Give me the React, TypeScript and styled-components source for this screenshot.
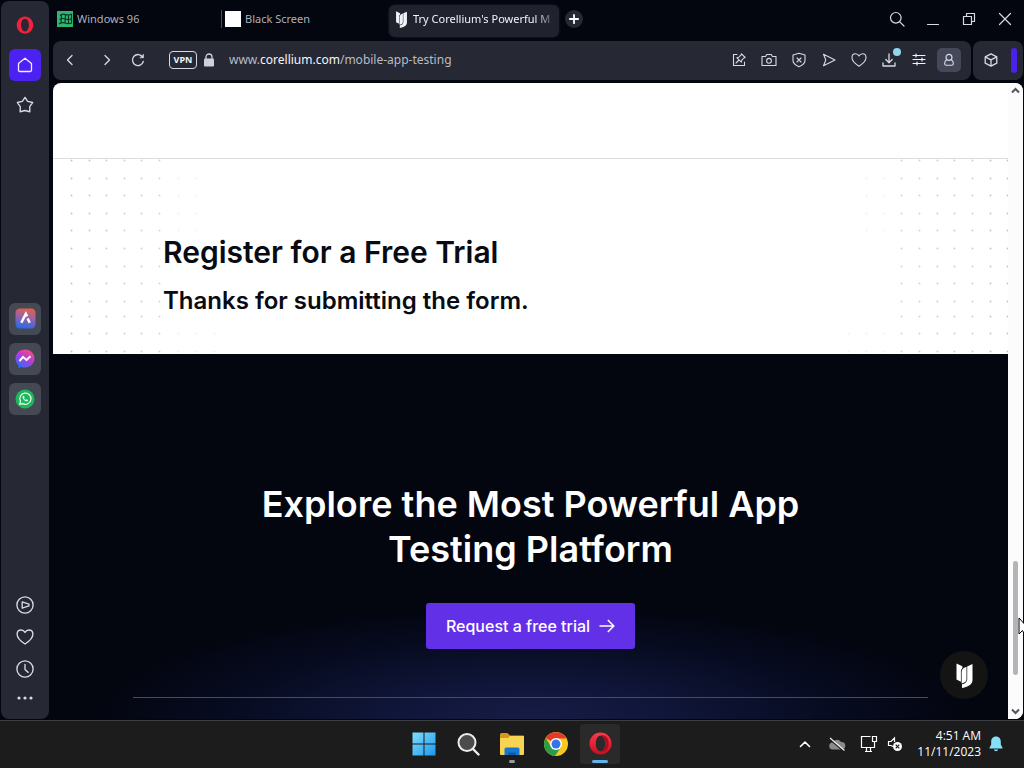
import React from 'react';
import styled, { createGlobalStyle, css } from 'styled-components';

const ui = '"Noto Sans", "Open Sans", sans-serif';

const GlobalStyle = createGlobalStyle`
  * { box-sizing: border-box; }
  html, body { margin: 0; padding: 0; background: #03050f; }
  body { font-family: ${ui}; overflow: hidden; }
  button, input { font: inherit; color: inherit; }
  h1, h2, p { margin: 0; }
`;

const Desktop = styled.div`
  position: relative;
  display: flex;
  flex-direction: column;
  height: 100vh;
  overflow: hidden;
  background: #03050f;
`;

const Browser = styled.div`
  flex: 1;
  min-height: 0;
  display: flex;
  gap: 4px;
  padding: 0 1px 1px;
`;

const Sidebar = styled.nav`
  width: 48px;
  margin: 1px 0 0;
  padding: 8px 0;
  display: flex;
  flex-direction: column;
  justify-content: space-between;
  background: #262934;
  border-radius: 8px;
`;

const SideGroup = styled.div<{ $gap: number; $top?: number }>`
  display: flex;
  flex-direction: column;
  align-items: center;
  gap: ${p => p.$gap}px;
  padding-top: ${p => p.$top ?? 0}px;
`;

const IconButton = styled.button<{ $size?: number; $h?: number; $bg?: string; $radius?: number; $color?: string }>`
  position: relative;
  flex: none;
  display: flex;
  align-items: center;
  justify-content: center;
  width: ${p => p.$size ?? 32}px;
  height: ${p => p.$h ?? p.$size ?? 32}px;
  padding: 0;
  border: 0;
  border-radius: ${p => p.$radius ?? 6}px;
  background: ${p => p.$bg ?? 'transparent'};
  color: ${p => p.$color ?? '#d7d9e4'};
  svg { display: block; }
`;

const Main = styled.div`
  flex: 1;
  min-width: 0;
  display: flex;
  flex-direction: column;
`;

const TabBar = styled.div`
  height: 41px;
  display: flex;
  align-items: center;
  padding: 0 2px 3px 0;
`;

const TabList = styled.div`
  display: flex;
  align-items: center;
  height: 38px;
  margin-right: 6px;
`;

const Tab = styled.button<{ $active?: boolean; $divider?: boolean }>`
  display: flex;
  align-items: center;
  gap: 4px;
  width: 168px;
  height: 32px;
  padding: 0 4px;
  border: 0;
  background: transparent;
  color: #aeb0ba;
  font-size: 11px;
  line-height: 16px;
  white-space: nowrap;
  overflow: hidden;
  svg { flex: none; }
  ${p => p.$divider && css`
    background: linear-gradient(#4b4d57, #4b4d57) 0 50% / 1px 18px no-repeat;
  `}
  ${p => p.$active && css`
    margin-top: 4px;
    width: 170px;
    padding: 0 5px 4px;
    background: #20232e;
    color: #f2f3f8;
    border-radius: 6px;
    box-shadow: 0 0 3px #20232e;
  `}
`;

const TabTitle = styled.span<{ $fade?: boolean }>`
  overflow: hidden;
  ${p => p.$fade && css`
    mask-image: linear-gradient(90deg, #000 122px, transparent 144px);
  `}
`;

const Spacer = styled.div`
  flex: 1;
`;

const WindowButtons = styled.div`
  display: flex;
  align-items: center;
  gap: 4px;
  height: 38px;
`;

const Bars = styled.div`
  display: flex;
  gap: 2px;
  height: 39px;
  margin-bottom: 3px;
`;

const AddressBar = styled.div`
  flex: 1;
  min-width: 0;
  display: flex;
  align-items: center;
  padding: 0 10px 1px 0;
  border-radius: 8px;
  background: #262934;
`;

const NavButtons = styled.div`
  display: flex;
  align-items: center;
  margin-right: 20px;
`;

const VpnButton = styled.button`
  width: 28px;
  height: 18px;
  padding: 0;
  border: 1px solid #d7d9e4;
  border-radius: 4px;
  background: transparent;
  color: #f2f3f8;
  font-size: 9px;
  font-weight: 700;
  line-height: 16px;
`;

const Address = styled.a`
  flex: 1;
  min-width: 0;
  margin-left: 8px;
  color: #b9bbc6;
  font-size: 12px;
  line-height: 18px;
  text-decoration: none;
  white-space: nowrap;
  overflow: hidden;
  b { font-weight: 400; color: #f5f6fa; }
`;

const Tools = styled.div`
  display: flex;
  align-items: center;
  gap: 6px;
`;

const Dot = styled.span`
  position: absolute;
  top: 0;
  right: 0;
  width: 8px;
  height: 8px;
  border-radius: 50%;
  background: #8fd6ea;
`;

const SideBar = styled.div`
  width: 50px;
  display: flex;
  align-items: center;
  justify-content: space-between;
  padding: 0 6px 1px;
  border-radius: 8px;
  background: #262934;
`;

const Accent = styled.span`
  width: 6px;
  height: 25px;
  border-radius: 3px;
  background: #4a22ea;
`;

const Viewport = styled.div`
  flex: 1;
  min-height: 0;
  display: flex;
  overflow: hidden;
  border-radius: 8px 8px 8px 0;
  background: #fff;
`;

const Page = styled.main`
  position: relative;
  flex: 1;
  min-width: 0;
  display: flex;
  flex-direction: column;
  font-family: Inter, sans-serif;
`;

const Blank = styled.div`
  flex: none;
  height: 75px;
`;

const FormSection = styled.section`
  position: relative;
  flex: none;
  height: 196px;
  padding: 73px 110px 0;
  border-top: 1px solid #dcdde0;
  background: #fff;
  color: #080b12;
`;

const Dots = styled.svg<{ $right?: boolean }>`
  position: absolute;
  top: 0;
  ${p => (p.$right ? 'right: 0;' : 'left: 0;')}
`;

const FormTitle = styled.h1`
  position: relative;
  font-size: 30px;
  font-weight: 600;
  line-height: 40px;
`;

const FormNote = styled.p`
  position: relative;
  margin-top: 13px;
  font-size: 24px;
  font-weight: 600;
  line-height: 32px;
`;

const Promo = styled.section`
  flex: 1;
  display: flex;
  flex-direction: column;
  align-items: center;
  padding: 128px 80px 0;
  background: radial-gradient(ellipse 440px 115px at 50% 100%, #171c45 0%, #10163a 30%, #070b20 70%, #03050f 100%) #03050f;
`;

const PromoTitle = styled.h2`
  max-width: 600px;
  color: #fff;
  text-align: center;
  font-size: 36px;
  font-weight: 600;
  line-height: 45px;
`;

const TrialLink = styled.a`
  display: flex;
  align-items: center;
  gap: 9px;
  height: 46px;
  margin-top: 31px;
  padding: 0 20px;
  border-radius: 3px;
  background: #6230e6;
  color: #fff;
  font-size: 16px;
  font-weight: 500;
  line-height: 24px;
  text-decoration: none;
`;

const Rule = styled.hr`
  width: 100%;
  margin: 48px 0 0;
  border: 0;
  border-top: 1px solid #444b66;
`;

const ChatButton = styled.button`
  position: absolute;
  right: 20px;
  bottom: 20px;
  display: flex;
  align-items: center;
  justify-content: center;
  width: 48px;
  height: 48px;
  padding: 0;
  border: 0;
  border-radius: 50%;
  background: #141414;
  color: #fff;
`;

const Scrollbar = styled.div`
  width: 15px;
  display: flex;
  flex-direction: column;
  align-items: center;
  padding: 4px 0;
  background: #fcfcfd;
`;

const Thumb = styled.div`
  width: 5px;
  height: 114px;
  margin-bottom: 33px;
  border-radius: 3px;
  background: #b4b5b8;
`;

const Pointer = styled.svg`
  position: absolute;
  right: -6px;
  top: 617px;
`;

const Taskbar = styled.footer`
  flex: none;
  height: 48px;
  display: grid;
  grid-template-columns: 1fr auto 1fr;
  align-items: center;
  padding-bottom: 2px;
  border-top: 1px solid #3c3e44;
  background: #1c1c1c;
  color: #fff;
`;

const Apps = styled.div`
  grid-column: 2;
  display: flex;
  gap: 4px;
`;

const AppButton = styled.button<{ $active?: boolean }>`
  position: relative;
  display: flex;
  align-items: center;
  justify-content: center;
  width: 40px;
  height: 40px;
  padding: 0;
  border: 0;
  border-radius: 4px;
  background: ${p => (p.$active ? '#2a2a2a' : 'transparent')};
`;

const Indicator = styled.span<{ $active?: boolean }>`
  position: absolute;
  bottom: 1px;
  width: ${p => (p.$active ? 16 : 6)}px;
  height: 3px;
  border-radius: 2px;
  background: ${p => (p.$active ? '#5fb4ea' : '#9c9c9c')};
`;

const Tray = styled.div`
  display: flex;
  align-items: center;
  justify-content: flex-end;
  padding-right: 21px;
`;

const Clock = styled.time`
  margin: 0 8px 0 12px;
  text-align: right;
  font-family: "Open Sans", "Noto Sans", sans-serif;
  font-size: 12px;
  line-height: 16px;
`;

type LineProps = { size?: number; w?: number; children: React.ReactNode };
const Line = ({ size = 16, w = 1.2, children }: LineProps) => (
  <svg width={size} height={size} viewBox="0 0 16 16" fill="none" stroke="currentColor" strokeWidth={w} strokeLinecap="round" strokeLinejoin="round">
    {children}
  </svg>
);

const heart = 'M8 14.2C5.5 12.6 1 9.400 1 5.500C1 3.200 2.600 1.800 4.500 1.800C6 1.800 7.300 2.600 8 4C8.700 2.600 10 1.800 11.500 1.800C13.400 1.800 15 3.200 15 5.500C15 9.400 10.500 12.600 8 14.200Z';

const OperaMark = ({ size, task }: { size: number; task?: boolean }) => (
  <svg width={size} height={size} viewBox="0 0 24 24">
    <defs>
      <linearGradient id="operaRed" x1="0" y1="0" x2="0" y2="1">
        <stop offset="0" stopColor="#ff3a4b" />
        <stop offset="1" stopColor="#c80d22" />
      </linearGradient>
    </defs>
    <path
      fillRule="evenodd"
      fill={task ? 'url(#operaRed)' : '#f2213c'}
      d={task
        ? 'M12 0.500a11.500 11.500 0 1 0 0 23a11.500 11.500 0 1 0 0-23ZM12 3.800c2.900 0 4.900 3.500 4.900 8.200s-2 8.200-4.900 8.200s-4.900-3.500-4.900-8.200s2-8.200 4.900-8.200Z'
        : 'M12 0.500c-6 0-11 5-11 11.500S6 23.500 12 23.500S23 18.500 23 12S18 0.500 12 0.500ZM12 3.500c3.200 0 5.200 3.700 5.200 8.500s-2 8.500-5.200 8.500s-5.200-3.700-5.200-8.500s2-8.500 5.200-8.500Z'}
    />
    {task && <path fill="#a81020" d="M12 3.800c2.900 0 4.900 3.500 4.900 8.200s-2 8.200-4.900 8.200c5.500 1.500 8.500-3 8.500-8.200s-3-9.700-8.500-8.200Z" />}
  </svg>
);

const CorelliumMark = ({ w, h }: { w: number; h: number }) => (
  <svg width={w} height={h} viewBox="0 0 17 25" fill="currentColor">
    <path d="M0.500 0.500L6.400 3.200V5C5.200 6 4.900 7.800 4.900 9.500V18.800L0.500 16.500Z" />
    <path d="M5.600 9.500C5.600 6.500 7.200 4.800 10.500 3.800V16C10.500 18.500 8.800 19.800 5.600 20.400Z" />
    <path d="M11.200 3.400L16.500 1V17C16.500 21 13 23.800 6 25V21.200C9.800 20.500 11.200 18.500 11.200 16Z" />
  </svg>
);

const rowsY = [1, 19, 36, 54, 71, 89, 107, 124, 142, 157, 174, 192];
const leftX = [18, 36, 53, 71, 88, 106, 125, 143, 161];
const rightX = [180, 163, 145, 127, 110, 92, 74, 57, 39, 21, 4];

const dotAlpha = (col: number, row: number, solid: number) => {
  if (col < solid) return 0.24 - (col / solid) * 0.07;
  const reach = row > 9 ? 3 : row > 0 && row < 5 ? 2 : 0;
  return col < solid + reach ? 0.06 : 0;
};

const DotField = ({ xs, solid, right }: { xs: number[]; solid: number; right?: boolean }) => (
  <Dots $right={right} width="181" height="195" aria-hidden="true">
    {rowsY.flatMap((y, r) =>
      xs.map((x, c) => <circle key={`${x}-${y}`} cx={x + 0.5} cy={y + 0.5} r="1" fill="#10131c" opacity={dotAlpha(c, r, solid)} />)
    )}
  </Dots>
);

const Chevron = ({ up }: { up?: boolean }) => (
  <svg width="9" height="7" viewBox="0 0 9 7" fill="none" stroke="#55565a" strokeWidth="2">
    <path d={up ? 'M1 5.500L4.500 2L8 5.500' : 'M1 1.500L4.500 5L8 1.500'} />
  </svg>
);

export default function App() {
  return (
    <Desktop>
      <GlobalStyle />
      <Browser>
        <Sidebar aria-label="Browser sidebar">
          <SideGroup $gap={8}>
            <IconButton aria-label="Opera menu"><OperaMark size={18} /></IconButton>
            <IconButton $bg="#4b22f2" aria-label="Home" $color="#f1edff">
              <Line w={1.3}><path d="M1.500 6.500L8 1.200L14.500 6.500V13.200a1.300 1.300 0 0 1-1.300 1.300H2.800a1.300 1.300 0 0 1-1.300-1.300Z" /></Line>
            </IconButton>
            <IconButton aria-label="Bookmarks">
              <Line size={18} w={1.2}><path d="M8 1.200L10.400 4.700L14.800 5.800L12.200 9.500L12.300 14L8 12.900L3.700 14L3.800 9.500L1.200 5.800L5.600 4.700Z" /></Line>
            </IconButton>
          </SideGroup>
          <SideGroup $gap={8} $top={7}>
            <IconButton $bg="#454954" aria-label="Aria">
              <svg width="21" height="21" viewBox="0 0 20 20">
                <defs>
                  <linearGradient id="aria" x1="0.600" y1="0" x2="0.400" y2="1">
                    <stop offset="0" stopColor="#e2604c" />
                    <stop offset="0.450" stopColor="#9a62a8" />
                    <stop offset="1" stopColor="#2769e8" />
                  </linearGradient>
                </defs>
                <rect x="0.500" y="0.500" width="19" height="19" rx="4" fill="url(#aria)" />
                <path d="M6 14L10.300 5.500L11.500 8" fill="none" stroke="#fff" strokeWidth="2.400" />
                <path d="M12 10L14 14" stroke="#fff" strokeWidth="2.400" />
              </svg>
            </IconButton>
            <IconButton $bg="#454954" aria-label="Messenger">
              <svg width="20" height="20" viewBox="0 0 20 20">
                <defs>
                  <linearGradient id="msgr" x1="0.800" y1="0" x2="0.200" y2="1">
                    <stop offset="0" stopColor="#ff4f72" />
                    <stop offset="0.450" stopColor="#b63cd8" />
                    <stop offset="1" stopColor="#1f6fff" />
                  </linearGradient>
                </defs>
                <path d="M10 0.500C4.500 0.500 0.500 4.500 0.500 9.600C0.500 12.400 1.600 14.700 3.500 16.300V19.300L6.300 18C7.500 18.400 8.700 18.600 10 18.600C15.500 18.600 19.500 14.700 19.500 9.600C19.500 4.500 15.500 0.500 10 0.500Z" fill="url(#msgr)" />
                <path d="M4.500 12L8 8L11.500 11L15.500 7.300" fill="none" stroke="#fff" strokeWidth="2" />
              </svg>
            </IconButton>
            <IconButton $bg="#454954" aria-label="WhatsApp">
              <svg width="20" height="20" viewBox="0 0 20 20">
                <circle cx="10" cy="10" r="9.500" fill="#1fb65c" />
                <path d="M4.700 15.300L5.500 12.400A5.600 5.600 0 1 1 7.700 14.600Z" fill="none" stroke="#e8fff0" strokeWidth="1.200" />
                <path d="M7.600 7.200C7.300 9.800 10 12.700 12.600 12.300L13 11L11.500 10.300L10.800 11C9.900 10.600 9.300 10 9 9.100L9.600 8.500L9 7Z" fill="#e8fff0" />
              </svg>
            </IconButton>
          </SideGroup>
          <SideGroup $gap={0}>
            <IconButton aria-label="Player">
              <Line size={18} w={1.2}><circle cx="8" cy="8" r="7.200" /><path d="M5.500 5.200V10.800L11.500 8.800V7.200Z" /></Line>
            </IconButton>
            <IconButton aria-label="Pinboards"><Line size={18} w={1.2}><path d={heart} /></Line></IconButton>
            <IconButton aria-label="History">
              <Line size={18} w={1.2}><circle cx="8" cy="8" r="7.200" /><path d="M8 4V8.500L10.800 11" /></Line>
            </IconButton>
            <IconButton $h={26} aria-label="More">
              <svg width="18" height="4" fill="currentColor"><circle cx="3" cy="2" r="1.600" /><circle cx="9" cy="2" r="1.600" /><circle cx="15" cy="2" r="1.600" /></svg>
            </IconButton>
          </SideGroup>
        </Sidebar>

        <Main>
          <TabBar>
            <TabList role="tablist">
              <Tab role="tab">
                <svg width="16" height="16" viewBox="0 0 16 16">
                  <rect width="16" height="16" fill="#2fb571" />
                  <path d="M3 4.500C5 2.500 7 3 8.500 3.500S12 4.500 14.500 3.300V12C12 13.400 9.500 12.500 8 12S4 11.500 2 13M2.500 8.500C5 7 7 7.500 8.500 8S12 9 14.500 7.800M8.500 3.500L8 12M4.500 4L4 12M11.500 4.500V13" fill="none" stroke="#07351f" strokeWidth="1.100" />
                </svg>
                <TabTitle>Windows 96</TabTitle>
              </Tab>
              <Tab role="tab" $divider>
                <svg width="16" height="16"><rect width="16" height="16" fill="#fff" /></svg>
                <TabTitle>Black Screen</TabTitle>
              </Tab>
              <Tab role="tab" $active aria-selected="true">
                <CorelliumMark w={15} h={17} />
                <TabTitle $fade>Try Corellium's Powerful M</TabTitle>
              </Tab>
            </TabList>
            <IconButton $size={18} $bg="#262934" $radius={9} $color="#fff" aria-label="New tab">
              <Line size={12} w={2.4}><path d="M8 2.500V13.500M2.500 8H13.500" /></Line>
            </IconButton>
            <Spacer />
            <WindowButtons>
              <IconButton aria-label="Search tabs"><Line w={1.2}><circle cx="6.800" cy="6.800" r="5.300" /><path d="M10.800 10.800L15 15" /></Line></IconButton>
              <IconButton aria-label="Minimize"><Line w={1.2}><path d="M2.500 13.500H13.500" /></Line></IconButton>
              <IconButton aria-label="Restore"><Line w={1.2}><path d="M2.500 5.500H10.500V13.500H2.500ZM5.500 5.500V2.500H13.500V10.500H10.500" /></Line></IconButton>
              <IconButton aria-label="Close"><Line w={1.2}><path d="M2.500 2.500L13.500 13.500M13.500 2.500L2.500 13.500" /></Line></IconButton>
            </WindowButtons>
          </TabBar>

          <Bars>
            <AddressBar>
              <NavButtons>
                <IconButton $size={34} aria-label="Back"><Line w={1.3}><path d="M10 3.500L5.500 8L10 12.500" /></Line></IconButton>
                <IconButton $size={40} $h={34} aria-label="Forward"><Line w={1.3}><path d="M6 3.500L10.500 8L6 12.500" /></Line></IconButton>
                <IconButton $size={22} aria-label="Reload"><Line w={1.3}><path d="M13.300 9.500A5.500 5.500 0 1 1 12.600 5" /><path d="M13.500 2.500V5.800H10.200Z" fill="currentColor" strokeWidth="0.600" /></Line></IconButton>
              </NavButtons>
              <VpnButton>VPN</VpnButton>
              <IconButton $size={24} $color="#cfd1da" aria-label="Site information">
                <svg width="12" height="14" viewBox="0 0 12 14"><rect x="1" y="5.500" width="10" height="8" rx="1" fill="currentColor" /><path d="M3 6V4a3 3 0 0 1 6 0V6" fill="none" stroke="currentColor" strokeWidth="1.300" /></svg>
              </IconButton>
              <Address href="#">www.<b>corellium.com</b>/mobile-app-testing</Address>
              <Tools>
                <IconButton $size={24} aria-label="Edit page"><Line w={1.1}><path d="M6 2.500H2.500V13.500H13.500V10M10.500 1.800L14.200 5.500L12.800 6L10.800 8.200L10.300 10.200L5.800 5.700L7.800 5.200L10 3.200ZM8 8L5 11" /></Line></IconButton>
                <IconButton $size={24} aria-label="Snapshot"><Line w={1.1}><path d="M1 4.500H4.500L5.800 2.500H10.200L11.500 4.500H15V13.500H1Z" /><circle cx="8" cy="8.800" r="2.400" /></Line></IconButton>
                <IconButton $size={24} aria-label="Ad blocker"><Line w={1.1}><path d="M8 1.200L14 3V8.500C14 11.500 11 13.500 8 14.800C5 13.500 2 11.500 2 8.500V3ZM6 6L10 10M10 6L6 10" /></Line></IconButton>
                <IconButton $size={24} aria-label="My Flow"><Line w={1.1}><path d="M2.500 2.200L14 8L2.500 13.800L4.800 8Z" /></Line></IconButton>
                <IconButton $size={24} aria-label="Add to bookmarks"><Line w={1.1}><path d={heart} /></Line></IconButton>
                <IconButton $size={24} aria-label="Downloads"><Line w={1.3}><path d="M8 2V10.500M4.800 7.500L8 10.700L11.200 7.500M2 11V14H14V11" /></Line><Dot /></IconButton>
                <IconButton $size={24} $color="#f2f3f8" aria-label="Easy setup"><Line w={1.2}><path d="M2 3.500H14M2 7.500H14M2 11.500H14M5 2V5M11 6V9M6 10V13" /></Line></IconButton>
                <IconButton $size={24} $bg="#454859" $radius={5} aria-label="Profile"><Line size={14} w={1.3}><circle cx="8" cy="5" r="3.400" /><path d="M5.500 7.300C3.500 8.500 3 10.500 3 12.200C3 13.500 4 14 5 14H11C12 14 13 13.500 13 12.200C13 10.500 12.500 8.500 10.500 7.300" /></Line></IconButton>
              </Tools>
            </AddressBar>
            <SideBar>
              <IconButton $size={24} aria-label="Extensions"><Line w={1.3}><path d="M8 1.800L13.800 4.800V11.200L8 14.200L2.200 11.200V4.800ZM2.200 4.800L8 7.800L13.800 4.800M8 7.800V14.200" /></Line></IconButton>
              <Accent />
            </SideBar>
          </Bars>

          <Viewport>
            <Page>
              <Blank />
              <FormSection>
                <DotField xs={leftX} solid={6} />
                <DotField xs={rightX} solid={7} right />
                <FormTitle>Register for a Free Trial</FormTitle>
                <FormNote>Thanks for submitting the form.</FormNote>
              </FormSection>
              <Promo>
                <PromoTitle>Explore the Most Powerful App Testing Platform</PromoTitle>
                <TrialLink href="#">
                  Request a free trial
                  <svg width="16" height="14" viewBox="0 0 16 14" fill="none" stroke="currentColor" strokeWidth="1.500"><path d="M0.500 7H14.500M8.800 1L14.800 7L8.800 13" /></svg>
                </TrialLink>
                <Rule />
              </Promo>
              <ChatButton aria-label="Open chat"><CorelliumMark w={17} h={25} /></ChatButton>
            </Page>
            <Scrollbar>
              <Chevron up />
              <Spacer />
              <Thumb />
              <Chevron />
            </Scrollbar>
          </Viewport>
        </Main>
      </Browser>

      <Taskbar>
        <Apps>
          <AppButton aria-label="Start">
            <svg width="24" height="24" viewBox="0 0 24 24">
              <defs><linearGradient id="win" x1="0" y1="0" x2="1" y2="1"><stop offset="0" stopColor="#7fe0fb" /><stop offset="1" stopColor="#1e96ee" /></linearGradient></defs>
              <path fill="url(#win)" d="M0.500 0.500H11.500V11.500H0.500ZM12.500 0.500H23.500V11.500H12.500ZM0.500 12.500H11.500V23.500H0.500ZM12.500 12.500H23.500V23.500H12.500Z" />
            </svg>
          </AppButton>
          <AppButton aria-label="Search">
            <svg width="24" height="24" viewBox="0 0 24 24"><circle cx="11" cy="10.500" r="8.500" fill="#4b4b4b" stroke="#ececec" strokeWidth="2" /><path d="M17 17L22.500 22.500" stroke="#ececec" strokeWidth="2.400" strokeLinecap="round" /></svg>
          </AppButton>
          <AppButton aria-label="File Explorer">
            <svg width="26" height="24" viewBox="0 0 26 24">
              <path d="M1 2.500a1.500 1.500 0 0 1 1.500-1.500H8.500L11 3.500H24a1 1 0 0 1 1 1V12H1Z" fill="#d49a17" />
              <path d="M1 6H9L11 4H25V22a1 1 0 0 1-1 1H2a1 1 0 0 1-1-1Z" fill="#f9d352" />
              <path d="M5.500 23V17a1.500 1.500 0 0 1 1.500-1.500H19a1.500 1.500 0 0 1 1.500 1.500V23Z" fill="#1777ce" />
              <path d="M9 23V20.500H17V23Z" fill="#0e5aa8" />
            </svg>
            <Indicator />
          </AppButton>
          <AppButton aria-label="Chrome">
            <svg width="24" height="24" viewBox="0 0 24 24">
              <circle cx="12" cy="12" r="12" fill="#f9c81e" />
              <path d="M12 12L1.600 6A12 12 0 0 1 22.400 6.500H12Z" fill="#e23a2e" />
              <path d="M1.600 6A12 12 0 0 0 11 23.950L17 15L7.200 14.700Z" fill="#2a9c48" />
              <circle cx="12" cy="12" r="6" fill="#fff" />
              <circle cx="12" cy="12" r="4.500" fill="#2f74e8" />
            </svg>
          </AppButton>
          <AppButton $active aria-label="Opera"><OperaMark size={23} task /><Indicator $active /></AppButton>
        </Apps>
        <Tray>
          <IconButton $color="#fff" aria-label="Show hidden icons"><Line w={1.6}><path d="M3.500 10.500L8 6L12.500 10.500" /></Line></IconButton>
          <IconButton aria-label="OneDrive">
            <svg width="18" height="16" viewBox="0 0 18 16"><path d="M5 13.500a3.500 3.500 0 0 1-.5-7A5 5 0 0 1 13 6a3.700 3.700 0 0 1 1 7.500Z" fill="#8a8a8a" /><path d="M2 3.500L15 14.800" stroke="#1c1c1c" strokeWidth="1.200" /><path d="M2 2L16.500 14.500" stroke="#eee" strokeWidth="1.200" /></svg>
          </IconButton>
          <IconButton $color="#fff" aria-label="Network">
            <svg width="18" height="18" viewBox="0 0 18 18" fill="none" stroke="currentColor" strokeWidth="1.200"><path d="M10.500 1.500H1.500V12.500H14.500V8.500M5 16.500H12M6.500 12.500V16.500M10.500 12.500V16.500M12.500 1.500H16.500V6.500H12.500ZM14.500 6.500V9" /></svg>
          </IconButton>
          <IconButton $size={20} $color="#fff" aria-label="Volume muted">
            <svg width="16" height="16" viewBox="0 0 16 16" fill="none" stroke="currentColor" strokeWidth="1.200"><path d="M6 10.500L4 9.500H1.500V5.500H4L7.500 2V6" /><circle cx="10.500" cy="10.500" r="4.500" fill="#fff" stroke="none" /><path d="M8.700 8.700L12.300 12.300M12.300 8.700L8.700 12.300" stroke="#1c1c1c" /></svg>
          </IconButton>
          <Clock>4:51 AM<br />11/11/2023</Clock>
          <IconButton $size={14} $h={16} $color="#86e0f7" aria-label="Notifications">
            <svg width="14" height="16" viewBox="0 0 14 16" fill="currentColor"><path d="M7 0.500C4 0.500 2.200 2.700 2.200 5.500V8.500L0.500 11.800V12.500H13.500V11.800L11.800 8.500V5.500C11.800 2.700 10 0.500 7 0.500ZM4.800 13.500A2.300 2.300 0 0 0 9.200 13.500Z" /></svg>
          </IconButton>
        </Tray>
      </Taskbar>

      <Pointer width="12" height="19" viewBox="0 0 12 19" aria-hidden="true">
        <path d="M1 1V17L4.500 13.500L6.600 18L9 17L6.700 12.500H11.500Z" fill="#fff" stroke="#000" />
      </Pointer>
    </Desktop>
  );
}
